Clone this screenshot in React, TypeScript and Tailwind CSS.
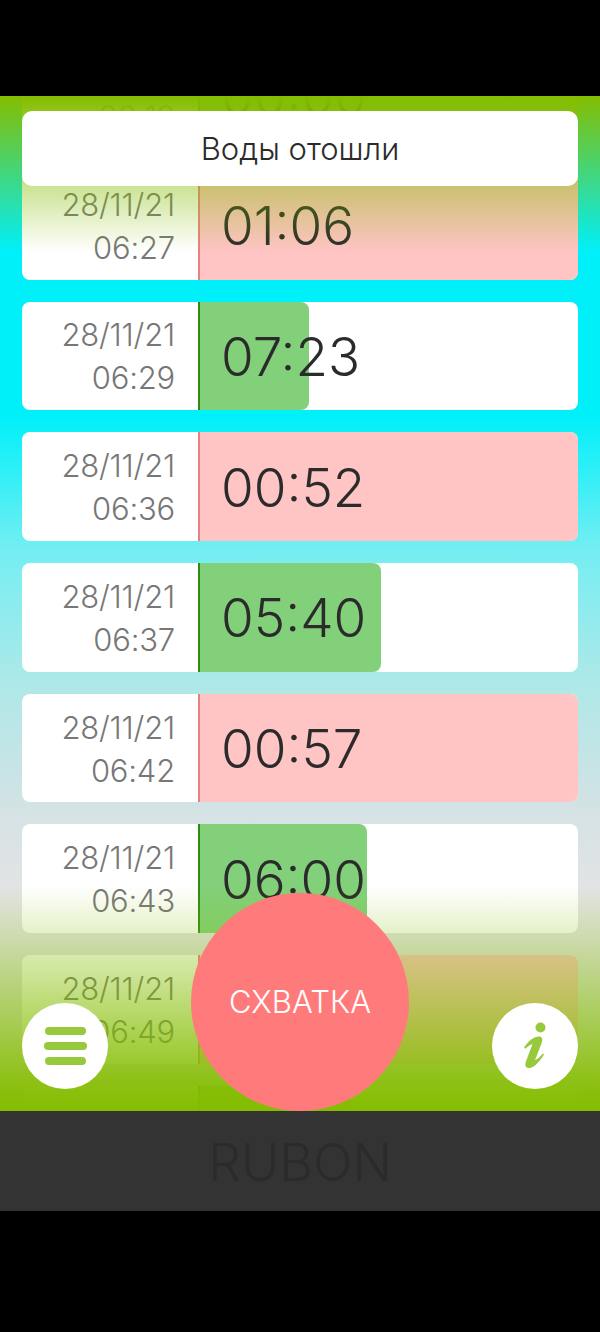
import React from "react";

type Row = {
  date: string;
  time: string;
  value: string;
  kind: "pink" | "green";
  barWidth: number;
};

const rows: Row[] = [
  { date: "28/11/21", time: "06:19", value: "00:00", kind: "green", barWidth: 380 },
  { date: "28/11/21", time: "06:27", value: "01:06", kind: "pink", barWidth: 380 },
  { date: "28/11/21", time: "06:29", value: "07:23", kind: "green", barWidth: 109 },
  { date: "28/11/21", time: "06:36", value: "00:52", kind: "pink", barWidth: 380 },
  { date: "28/11/21", time: "06:37", value: "05:40", kind: "green", barWidth: 181 },
  { date: "28/11/21", time: "06:42", value: "00:57", kind: "pink", barWidth: 380 },
  { date: "28/11/21", time: "06:43", value: "06:00", kind: "green", barWidth: 167 },
  { date: "28/11/21", time: "06:49", value: "00:58", kind: "pink", barWidth: 380 },
  { date: "28/11/21", time: "06:50", value: "05:10", kind: "green", barWidth: 150 },
];

const HistoryRow: React.FC<{ row: Row }> = ({ row }) => (
  <div className="flex h-[108.5px] shrink-0 overflow-hidden rounded-[8px] bg-white">
    <div className="flex w-[176px] shrink-0 flex-col justify-center pt-[1px] pr-[23px] text-right text-[31px] leading-[43px] font-light tracking-[-0.2px] text-[#777777]">
      <span>{row.date}</span>
      <span>{row.time}</span>
    </div>
    <div
      className={
        row.kind === "pink"
          ? "relative flex flex-1 items-center border-l-2 border-[#e88080] pt-[3px] pl-[21px]"
          : "relative flex flex-1 items-center border-l-2 border-[#2f8a12] pt-[3px] pl-[21px]"
      }
    >
      <div
        className={
          row.kind === "pink"
            ? "absolute inset-y-0 left-0 rounded-r-[8px] bg-[#ffc4c4]"
            : "absolute inset-y-0 left-0 rounded-r-[8px] bg-[#82d07a]"
        }
        style={{ width: row.barWidth }}
      ></div>
      <span className="relative text-[53px] leading-none font-light text-[#2b2b2b]">{row.value}</span>
    </div>
  </div>
);

const App: React.FC = () => {
  return (
    <div className="flex h-[1332px] w-[600px] flex-col bg-black pt-[96px] font-['Inter','Liberation_Sans',sans-serif]">
      <div className="relative h-[1015px] shrink-0 overflow-hidden bg-[linear-gradient(to_bottom,#00f0fa_0px,#00f0fa_320px,#75eef2_456px,#aee8e8_587px,#d6e2e4_720px,#e4e4e4_810px,#e4e4e4_1015px)]">
        {/* History list, scrolled under the banner */}
        <div className="-mt-[55.7px] flex flex-col gap-[22.2px] px-[22px]">
          {rows.map((row) => (
            <HistoryRow key={row.time} row={row} />
          ))}
        </div>

        {/* Green fades at both ends of the list */}
        <div className="absolute inset-x-0 top-0 h-[156px] bg-[linear-gradient(to_bottom,#84bd00,rgba(132,189,0,0))]"></div>
        <div className="absolute inset-x-0 bottom-0 h-[225px] bg-[linear-gradient(to_top,#84bd00_0px,rgba(132,189,0,0.95)_20px,rgba(132,189,0,0))]"></div>

        {/* Banner */}
        <div className="absolute left-[22px] right-[22px] top-[15px] flex h-[75px] items-center justify-center rounded-[10px] bg-white pt-[2px] text-[31px] font-light text-[#2b2b2b]">
          Воды отошли
        </div>

        {/* Buttons */}
        <button className="absolute bottom-[22px] left-[22px] flex h-[86px] w-[86px] flex-col items-center justify-center gap-[7px] rounded-full bg-white">
          <span className="h-[8px] w-[41px] rounded-full bg-[#97c93c]"></span>
          <span className="h-[8px] w-[43px] rounded-full bg-[#97c93c]"></span>
          <span className="h-[8px] w-[41px] rounded-full bg-[#97c93c]"></span>
        </button>
        <button className="absolute bottom-0 left-[191px] flex h-[218px] w-[218px] items-center justify-center rounded-full bg-[#ff7b7b] text-[31px] font-light text-white">
          СХВАТКА
        </button>
        <button className="absolute bottom-[22px] right-[22px] flex h-[86px] w-[86px] items-center justify-center rounded-full bg-white">
          <svg width="86" height="86" viewBox="0 0 86 86" fill="#97c93c">
            <circle cx="48.5" cy="24.5" r="5" />
            <path d="M32 44.5C36 38.5 42 33 47.5 33.5C51 34 50.5 37.5 49.5 40.5L43 57C45.5 56.5 48 53.5 51 50.5L52 51.5C48 58 42 65.5 36.5 65C32.5 64.5 33 60.5 34.5 57L40.5 41C38 41.5 36 43.5 33.5 45.7Z" />
          </svg>
        </button>
      </div>

      {/* Footer bar */}
      <div className="flex h-[100px] shrink-0 items-center justify-center bg-[#333333] pt-[4px] text-[52px] font-light text-[#2b2b2b]">
        RUBON
      </div>
    </div>
  );
};

export default App;
